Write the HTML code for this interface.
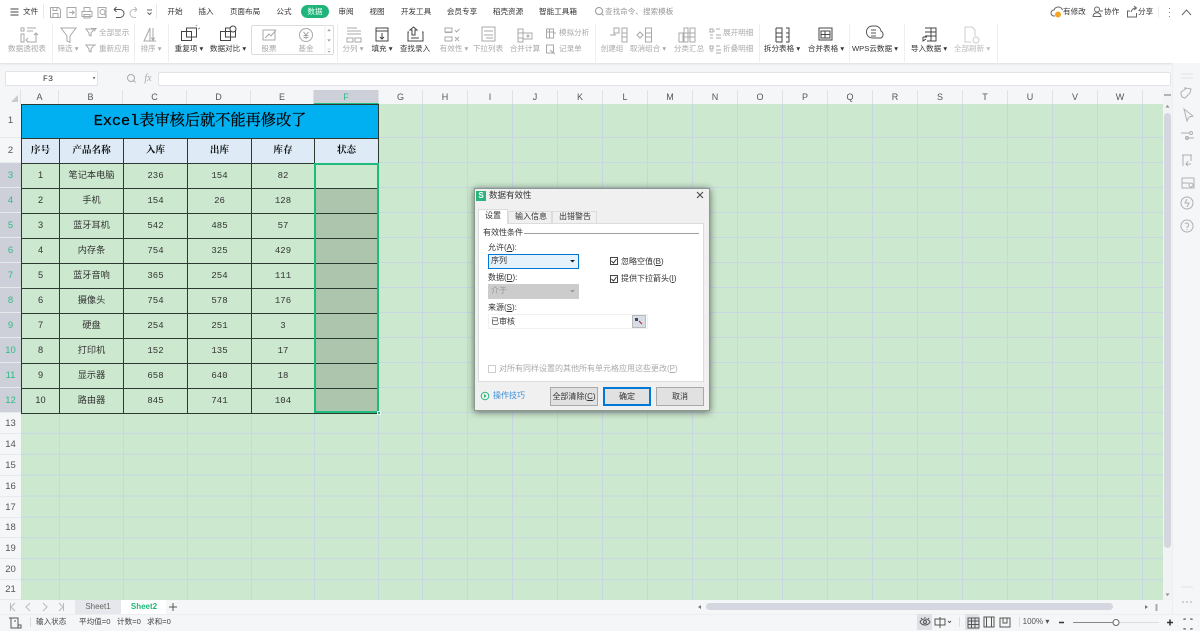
<!DOCTYPE html>
<html lang="zh"><head><meta charset="utf-8"><title>Excel</title>
<style>
html,body{margin:0;padding:0;width:1200px;height:631px;overflow:hidden;background:#f5f6f8}
body{position:relative;font-family:"Liberation Sans","Noto Sans CJK SC",sans-serif;font-size:7.6px;color:#444;filter:blur(.3px)}
.a{position:absolute}
.t{position:absolute;white-space:nowrap;transform:translate(-50%,-50%);line-height:1}
.l{position:absolute;white-space:nowrap;transform:translateY(-50%);line-height:1}
.g{color:#aaa}.d{color:#333}
.h{position:absolute;top:90px;height:14px;background:#f5f6f8;border-right:1px solid #dfe1e6;box-sizing:border-box;text-align:center;font-size:9px;line-height:14px;color:#555}
.r{position:absolute;left:0;width:21px;background:#f5f6f8;box-sizing:border-box;text-align:center;font-size:9.5px;color:#555;border-bottom:1px solid #e8e9ed}
.rs{background:#cdd0d8;color:#2dbb85}
table{position:absolute;left:21px;top:104px;width:357px;height:309px;border-collapse:collapse;table-layout:fixed;font-family:"Liberation Mono","Noto Serif CJK SC",serif;color:#333}
td{border:1px solid #2c3a30;text-align:center;padding:0;font-size:9px;height:24px;overflow:hidden;line-height:1}
tr.h1 td{height:33px;background:#00b0f0;font-size:15.2px;font-weight:normal;color:#000;-webkit-text-stroke:.25px #000}
tr.h2 td{background:#deebf7;font-weight:bold;font-size:9.6px;color:#111}
td.c{font-family:"Liberation Sans","Noto Sans CJK SC",sans-serif;font-size:9.2px;color:#333}
td.s{background:#adc4ad}
.btn{position:absolute;top:387px;width:48px;height:19px;box-sizing:border-box;border:1px solid #a9a9a9;background:#e1e1e1;text-align:center;line-height:17px;font-size:8px;color:#333}
svg{position:absolute;left:0;top:0;overflow:visible}
</style></head><body>

<!-- ribbon -->
<div class="a" style="left:0;top:0;width:1200px;height:63px;background:#fff;box-shadow:0 1px 2px #dcdde0"></div>

<div class="l d" style="left:23px;top:12px">文件</div>
<div class="t d" style="left:175px;top:12px">开始</div>
<div class="t d" style="left:206px;top:12px">插入</div>
<div class="t d" style="left:245px;top:12px">页面布局</div>
<div class="t d" style="left:284px;top:12px">公式</div>
<div class="a" style="left:301px;top:5px;width:28px;height:13px;border-radius:7px;background:#1fb57a"></div>
<div class="t" style="left:315px;top:12px;color:#e8fff5">数据</div>
<div class="t d" style="left:346px;top:12px">审阅</div>
<div class="t d" style="left:377px;top:12px">视图</div>
<div class="t d" style="left:416px;top:12px">开发工具</div>
<div class="t d" style="left:462px;top:12px">会员专享</div>
<div class="t d" style="left:508px;top:12px">稻壳资源</div>
<div class="t d" style="left:558px;top:12px">智能工具箱</div>
<div class="l" style="left:605px;top:12px;color:#999">查找命令、搜索模板</div>
<div class="l d" style="left:1063px;top:12px">有修改</div>
<div class="l d" style="left:1104px;top:12px">协作</div>
<div class="l d" style="left:1138px;top:12px">分享</div>

<div class="t g" style="left:27px;top:49px">数据透视表</div>
<div class="t g" style="left:68px;top:49px">筛选 ▾</div>
<div class="l g" style="left:99px;top:33px">全部显示</div>
<div class="l g" style="left:99px;top:49px">重新应用</div>
<div class="t g" style="left:151px;top:49px">排序 ▾</div>
<div class="t d" style="left:189px;top:49px">重复项 ▾</div>
<div class="t d" style="left:228px;top:49px">数据对比 ▾</div>
<div class="a" style="left:251px;top:25px;width:83px;height:30px;border:1px solid #dcdcdc;border-radius:2px;box-sizing:border-box"></div>
<div class="t g" style="left:269px;top:49px">股票</div>
<div class="t g" style="left:306px;top:49px">基金</div>
<div class="t g" style="left:353px;top:49px">分列 ▾</div>
<div class="t d" style="left:382px;top:49px">填充 ▾</div>
<div class="t d" style="left:415px;top:49px">查找录入</div>
<div class="t g" style="left:454px;top:49px">有效性 ▾</div>
<div class="t g" style="left:488px;top:49px">下拉列表</div>
<div class="t g" style="left:525px;top:49px">合并计算</div>
<div class="l g" style="left:559px;top:33px">模拟分析</div>
<div class="l g" style="left:559px;top:49px">记录单</div>
<div class="t g" style="left:612px;top:49px">创建组</div>
<div class="t g" style="left:648px;top:49px">取消组合 ▾</div>
<div class="t g" style="left:689px;top:49px">分类汇总</div>
<div class="l g" style="left:723px;top:33px">展开明细</div>
<div class="l g" style="left:723px;top:49px">折叠明细</div>
<div class="t d" style="left:782px;top:49px">拆分表格 ▾</div>
<div class="t d" style="left:826px;top:49px">合并表格 ▾</div>
<div class="t d" style="left:875px;top:49px">WPS云数据 ▾</div>
<div class="t d" style="left:929px;top:49px">导入数据 ▾</div>
<div class="t g" style="left:972px;top:49px;color:#bbb">全部刷新 ▾</div>

<!-- formula bar -->
<div class="a" style="left:5px;top:71px;width:93px;height:15px;background:#fff;border:1px solid #e2e3e6;box-sizing:border-box;border-radius:2px"></div>
<div class="t" style="left:48px;top:79px;font-family:'Liberation Mono',monospace;font-size:8.5px;color:#333">F3</div>
<div class="t" style="left:94px;top:79px;font-size:5px;color:#666">▾</div>
<div class="t" style="left:148px;top:79px;font-family:'Liberation Serif',serif;font-style:italic;font-size:10px;color:#aaa">fx</div>
<div class="a" style="left:158px;top:72px;width:1013px;height:14px;background:#fff;border:1px solid #e2e3e6;box-sizing:border-box;border-radius:2px"></div>

<!-- sheet area -->
<div class="a" id="sheet" style="left:21px;top:104px;width:1142px;height:496px;background:#cce8cf"></div>
<div class="a" style="left:378px;top:104px;width:785px;height:496px;background-image:linear-gradient(to right,transparent 44px,#c8d6e2 44px);background-size:45px 100%"></div>
<div class="a" style="left:378px;top:138px;width:785px;height:275px;background-image:linear-gradient(to bottom,transparent 24px,#c8d6e2 24px);background-size:100% 25px"></div>
<div class="a" style="left:378px;top:137px;width:785px;height:1px;background:#c8d6e2"></div>
<div class="a" style="left:21px;top:413px;width:1142px;height:187px;background-image:linear-gradient(to bottom,transparent 20px,#c8d6e2 20px);background-size:100% 20.9px"></div>
<div class="a" style="left:59px;top:413px;width:1px;height:187px;background:#c8d6e2"></div>
<div class="a" style="left:123px;top:413px;width:1px;height:187px;background:#c8d6e2"></div>
<div class="a" style="left:187px;top:413px;width:1px;height:187px;background:#c8d6e2"></div>
<div class="a" style="left:251px;top:413px;width:1px;height:187px;background:#c8d6e2"></div>
<div class="a" style="left:314px;top:413px;width:1px;height:187px;background:#c8d6e2"></div>
<div class="a" style="left:378px;top:413px;width:1px;height:187px;background:#c8d6e2"></div>

<table>
<colgroup><col style="width:38px"><col style="width:64px"><col style="width:64px"><col style="width:64px"><col style="width:63px"><col style="width:64px"></colgroup>
<tr class="h1"><td colspan="6">Excel表审核后就不能再修改了</td></tr>
<tr class="h2"><td>序号</td><td>产品名称</td><td>入库</td><td>出库</td><td>库存</td><td>状态</td></tr>
<tr><td class="c">1</td><td class="c">笔记本电脑</td><td>236</td><td>154</td><td>82</td><td></td></tr>
<tr><td class="c">2</td><td class="c">手机</td><td>154</td><td>26</td><td>128</td><td class="s"></td></tr>
<tr><td class="c">3</td><td class="c">蓝牙耳机</td><td>542</td><td>485</td><td>57</td><td class="s"></td></tr>
<tr><td class="c">4</td><td class="c">内存条</td><td>754</td><td>325</td><td>429</td><td class="s"></td></tr>
<tr><td class="c">5</td><td class="c">蓝牙音响</td><td>365</td><td>254</td><td>111</td><td class="s"></td></tr>
<tr><td class="c">6</td><td class="c">摄像头</td><td>754</td><td>578</td><td>176</td><td class="s"></td></tr>
<tr><td class="c">7</td><td class="c">硬盘</td><td>254</td><td>251</td><td>3</td><td class="s"></td></tr>
<tr><td class="c">8</td><td class="c">打印机</td><td>152</td><td>135</td><td>17</td><td class="s"></td></tr>
<tr><td class="c">9</td><td class="c">显示器</td><td>658</td><td>640</td><td>18</td><td class="s"></td></tr>
<tr><td class="c">10</td><td class="c">路由器</td><td>845</td><td>741</td><td>104</td><td class="s"></td></tr>
</table>
<div class="a" style="left:314px;top:163px;width:65px;height:250px;border:2px solid #1fba7e;box-sizing:border-box"></div>
<div class="a" style="left:377px;top:411px;width:4px;height:4px;background:#1fba7e;border:1px solid #e8fff2;box-sizing:border-box"></div>
<div class="a" style="left:20px;top:163px;width:1px;height:250px;background:#1fba7e"></div>

<!-- column headers -->
<div class="a" style="left:0;top:90px;width:1163px;height:14px;background:#f5f6f8"></div>
<div class="h" style="left:0;width:21px"></div>
<div class="h" style="left:21px;width:38px">A</div>
<div class="h" style="left:59px;width:64px">B</div>
<div class="h" style="left:123px;width:64px">C</div>
<div class="h" style="left:187px;width:64px">D</div>
<div class="h" style="left:251px;width:63px">E</div>
<div class="h" style="left:314px;width:65px;background:#cdd0d8;color:#2dbb85;border-bottom:1px solid #1fba7e">F</div>
<div class="h" style="left:379px;width:44px">G</div>
<div class="h" style="left:423px;width:45px">H</div>
<div class="h" style="left:468px;width:45px">I</div>
<div class="h" style="left:513px;width:45px">J</div>
<div class="h" style="left:558px;width:45px">K</div>
<div class="h" style="left:603px;width:45px">L</div>
<div class="h" style="left:648px;width:45px">M</div>
<div class="h" style="left:693px;width:45px">N</div>
<div class="h" style="left:738px;width:45px">O</div>
<div class="h" style="left:783px;width:45px">P</div>
<div class="h" style="left:828px;width:45px">Q</div>
<div class="h" style="left:873px;width:45px">R</div>
<div class="h" style="left:918px;width:45px">S</div>
<div class="h" style="left:963px;width:45px">T</div>
<div class="h" style="left:1008px;width:45px">U</div>
<div class="h" style="left:1053px;width:45px">V</div>
<div class="h" style="left:1098px;width:45px">W</div>
<div class="h" style="left:1143px;width:20px;border-right:0"></div>

<!-- row headers -->
<div class="r" style="top:104px;height:34px;line-height:34px">1</div>
<div class="r" style="top:138px;height:25px;line-height:25px">2</div>
<div class="r rs" style="top:163px;height:25px;line-height:25px">3</div>
<div class="r rs" style="top:188px;height:25px;line-height:25px">4</div>
<div class="r rs" style="top:213px;height:25px;line-height:25px">5</div>
<div class="r rs" style="top:238px;height:25px;line-height:25px">6</div>
<div class="r rs" style="top:263px;height:25px;line-height:25px">7</div>
<div class="r rs" style="top:288px;height:25px;line-height:25px">8</div>
<div class="r rs" style="top:313px;height:25px;line-height:25px">9</div>
<div class="r rs" style="top:338px;height:25px;line-height:25px">10</div>
<div class="r rs" style="top:363px;height:25px;line-height:25px">11</div>
<div class="r rs" style="top:388px;height:25px;line-height:25px">12</div>
<div class="r" style="top:413px;height:21px;line-height:21px">13</div>
<div class="r" style="top:434px;height:21px;line-height:21px">14</div>
<div class="r" style="top:455px;height:21px;line-height:21px">15</div>
<div class="r" style="top:476px;height:21px;line-height:21px">16</div>
<div class="r" style="top:497px;height:21px;line-height:21px">17</div>
<div class="r" style="top:518px;height:20px;line-height:20px">18</div>
<div class="r" style="top:538px;height:21px;line-height:21px">19</div>
<div class="r" style="top:559px;height:21px;line-height:21px">20</div>
<div class="r" style="top:580px;height:20px;line-height:20px">21</div>

<!-- vertical scrollbar + side -->
<div class="a" style="left:1163px;top:90px;width:9px;height:510px;background:#f2f3f5"></div>
<div class="a" style="left:1164px;top:113px;width:7px;height:435px;background:#d5d7e0;border-radius:4px"></div>
<div class="a" style="left:1172px;top:63px;width:28px;height:568px;background:#f5f6f8;border-left:1px solid #eceef0;box-sizing:border-box"></div>

<!-- bottom -->
<div class="a" style="left:0;top:600px;width:1172px;height:14px;background:#f5f6f8"></div>
<div class="a" style="left:0;top:614px;width:1200px;height:17px;background:#f5f6f8;border-top:1px solid #eceef0;box-sizing:border-box"></div>
<div class="a" style="left:75px;top:600px;width:46px;height:14px;background:#e6e7ec"></div>
<div class="a" style="left:121px;top:600px;width:45px;height:14px;background:#fff"></div>
<div class="t" style="left:98px;top:607px;font-size:8px;color:#666">Sheet1</div>
<div class="t" style="left:144px;top:607px;font-size:8px;font-weight:bold;color:#1fb57a">Sheet2</div>
<div class="a" style="left:706px;top:603px;width:407px;height:7px;background:#d5d7e0;border-radius:4px"></div>
<div class="l" style="left:36px;top:622px;color:#444">输入状态</div>
<div class="l" style="left:79px;top:622px;color:#444">平均值=0</div>
<div class="l" style="left:117px;top:622px;color:#444">计数=0</div>
<div class="l" style="left:147px;top:622px;color:#444">求和=0</div>
<div class="t" style="left:1036px;top:622px;font-size:8px;color:#555">100% ▾</div>
<div class="a" style="left:917px;top:614px;width:15px;height:16px;background:#dfe1e6"></div>
<div class="a" style="left:965px;top:614px;width:14px;height:16px;background:#dfe1e6"></div>

<!-- icons -->
<svg width="1200" height="631" fill="none" stroke="#a8a8a8" stroke-width="1">
<!-- top bar -->
<g stroke="#444"><path d="M10.500 9h8M10.500 12h8M10.500 15h8"/></g>
<path d="M43.500 4v14M156.500 4v14" stroke="#e8e8e8"/>
<path d="M50.500 7.500h8l2 2v8h-10zM53 17.500v-4h5v4M53 7.500v3h4v-3"/>
<path d="M67 7.500h9v10h-9zM69 12.500h5l-2-2M74 12.500l-2 2"/>
<path d="M82 11.500h10v5h-10zM84 11.500v-4h6v4M84 14.500h6v3.500h-6z"/>
<path d="M98 7.500h8v10h-8z"/><circle cx="102.500" cy="12" r="2.500"/><path d="M104.500 14l2 3"/>
<path d="M114 9.500h6a4 4 0 0 1 0 8h-4M114 9.500l2.500-2.500M114 9.500l2.500 2.500" stroke="#555"/>
<path d="M137 9.500h-3a4 4 0 0 0 0 8h2M137 9.500l-2.500-2.500M137 9.500l-2.500 2.500" stroke="#bbb"/>
<path d="M147 10h5M147.500 12.500l2 2 2-2" stroke="#666"/>
<!-- search -->
<circle cx="599" cy="11" r="3.500" stroke="#999"/><path d="M601.500 13.500l2 2" stroke="#999"/>
<!-- right top -->
<path d="M1055 16h-1a3 3 0 0 1 0-6 4.500 4.500 0 0 1 8.500 0" stroke="#666"/><circle cx="1058" cy="14.500" r="2.500" fill="#f5a623" stroke="#f5a623"/>
<circle cx="1097" cy="9.500" r="2.500" stroke="#666"/><path d="M1093 16.500c0-5 8-5 8 0zM1100 11h3" stroke="#666"/>
<path d="M1130 11h-2.500v6h9v-4M1131 12c1-3 3-4 5-4M1134 6l2.500 2-2.500 2" stroke="#666"/>
<path d="M1158.500 6v12" stroke="#eee"/>
<path d="M1169.500 8v1M1169.500 12v1M1169.500 16v1" stroke="#888"/>
<path d="M1182 15l4.500-5 4.500 5" stroke="#666"/>
<!-- ribbon separators -->
<path d="M52.500 24v38M134.500 24v38M168.500 24v38M337.500 24v38M595.500 24v38M759.500 24v38M849.500 24v38M904.500 24v38M997.500 24v38" stroke="#eeeeee"/>
<!-- pivot -->
<path d="M21 28h3v3h-3zM21 34h3v8h-3zM27 28h9M27 31h6M36 33v9h-9M28 38l-2 2 2 2M34 35l2-2 2 2"/>
<!-- filter -->
<path d="M61 28h15l-6 8v6.500l-3-1.500v-5z"/>
<path d="M86 29h8l-3 4v3l-2-1v-2zM91 28.500h5l-2 3"/>
<path d="M86 45h8l-3 4v3l-2-1v-2zM91 45h5"/>
<!-- sort -->
<path d="M144 41l6-13v13zM144 41h12M153 28v12M151.500 37.500l1.500 3 1.500-3"/>
<!-- dup -->
<g stroke="#444"><path d="M181.500 31.500h10v9h-10zM186.500 28h10v9h-10z"/><path d="M196 26l1-1M198 29l2-1" stroke="#999"/></g>
<g stroke="#444"><path d="M220.500 31.500h10v9h-10zM225.500 28h10v9h-10z"/><circle cx="233" cy="29" r="3" fill="#fff"/></g>
<!-- stock, fund -->
<path d="M263 30h12v10h-12zM265 38l4-4 2 2 5-6"/>
<circle cx="306" cy="35" r="6.500"/><path d="M303.500 32l2.500 3 2.500-3M303.500 35.500h5M303.500 37.500h5M306 35v4"/>
<path d="M325 25v30" stroke="#eee"/><path d="M329 29l-1.500 2h3zM327.500 39.500h3l-1.500 2zM327.500 49h3M327.500 51l1.500 1.500 1.500-1.500" fill="#aaa" stroke="#aaa" stroke-width=".5"/>
<!-- split col -->
<path d="M347 28h10M347 31h14M347 34h14M347 38h6v4h-6zM355 38h6v4h-6z"/>
<!-- fill -->
<path d="M376 28h12v13h-12zM376 31h12M382 33v6M380 37l2 2 2-2" stroke="#444"/>
<!-- lookup -->
<path d="M409 32h-1v9h15v-9h-1M411 38h8" stroke="#444"/><path d="M412 35v-5h-2l3.500-3 3.500 3h-2v5z" stroke="#444"/>
<!-- validity -->
<path d="M445 28h7v4h-7zM445 37h7v4h-7zM445 32.500h7M455 30l1.500 2 3-3M455 37l4 4M459 37l-4 4"/>
<path d="M482 27h13v14h-13zM484 31h9M484 35h9M486 38h7"/>
<path d="M518 29h5v13h-5zM523 33h9v6h-9zM518 33h5M518 38h5"/><circle cx="528" cy="36" r="1"/>
<path d="M546.500 29h7v9h-7zM546.500 32h7M549.500 29v9M554 33h2"/>
<path d="M546.500 45h7v8h-7zM550 50l5 4"/>
<!-- group -->
<path d="M614 28h5v5h-5zM622 28h5v14h-5zM622 33h5M622 37h5M610 35h4v-2M616 35l-2 0"/>
<path d="M645.500 28h6v14h-6zM645.500 33h6M645.500 37h6M637 35l3-3 3 3-3 3z"/>
<path d="M684 28h4v14h-4zM690 28h5v14h-5zM679 33h4v9h-4zM684 33h11M684 37h11"/>
<path d="M710 29h3v3h-3zM710 35h3M710 38h3M716 29h4M716 35h5M716 38h5M714 31h1"/>
<path d="M710 46h3v3h-3zM710 51h3M716 46h4M716 50h5M716 53h5"/>
<!-- split/merge -->
<g stroke="#444"><path d="M776 28h6v14h-6M776 28v14M776 33h6M776 37h6M786 28h3v14h-3M786 33h3M786 37h3"/></g>
<g stroke="#444"><path d="M819 28h13v12h-13zM821 31h9v7h-9zM821 34.500h9M825 31v7"/></g>
<path d="M872 26h4a6 6 0 0 1 5 5 4 4 0 0 1 0 7h-8a6 6 0 0 1-1-12zM871 30h5M871 33h5M871 36h5" stroke="#555"/>
<g stroke="#444"><path d="M925 28h11v13h-9M925 32h11M925 36h11M931 28v13M927 37l-4 0M923 37v4l3-2"/></g>
<path d="M965 27h7l3 3v6M965 27v15h6" stroke="#ccc"/><circle cx="976" cy="40" r="3" stroke="#ccc"/>
<!-- formula search -->
<circle cx="131" cy="78" r="3.500" stroke="#aaa"/><path d="M133.500 80.500l2 2" stroke="#aaa"/>
<!-- corner triangle -->
<path d="M11 102h7v-7z" fill="#c8cacf" stroke="none"/>
<!-- vertical scroll buttons -->
<path d="M1164 95h7" stroke="#888" stroke-width="1.200"/>
<path d="M1167.500 105l-2 2.500h4z" fill="#888" stroke="none"/>
<path d="M1165.500 593.500h4l-2 2.500z" fill="#888" stroke="none"/>
<!-- side icons -->
<g stroke="#b0b0b0">
<path d="M1181 92l6-4 4 1-1 4-5 5-3-1-1-3zM1184 88h3"/>
<path d="M1184 109l3 12 2-4 4-1z"/>
<path d="M1181 133h8M1186 138h8"/><circle cx="1191" cy="133" r="1.500"/><circle cx="1187" cy="138" r="1.500"/>
<path d="M1182 155h10M1183 155v11M1191 155v6M1186 164h5M1188 161l-2 3 2 2"/>
<path d="M1182 178h12v10h-12zM1182 183h7"/><circle cx="1191" cy="185" r="2"/>
<circle cx="1187" cy="203" r="6"/><path d="M1187 199l-2 4h4l-2 4"/>
<circle cx="1187" cy="226" r="6"/><path d="M1185 224a2 2 0 1 1 2 3v1M1187 229v1"/>
<path d="M1181 78h12M1181 74h12" stroke="#e2e2e2"/>
<path d="M1181 587h12" stroke="#e2e2e2"/>
<path d="M1182 602h2M1186 602h2M1190 602h2" stroke="#aaa"/>
</g>
<!-- sheet nav -->
<g stroke="#bbb"><path d="M10.500 603v8M15 603l-4 4 4 4M30 603l-4 4 4 4M43 603l4 4-4 4M59 603l4 4-4 4M63.500 603v8"/></g>
<path d="M173 603v8M169 607h8" stroke="#555"/>
<path d="M701 605l-3 2 3 2z" fill="#777" stroke="none"/>
<path d="M1145 605l3 2-3 2z" fill="#777" stroke="none"/>
<path d="M1156.500 604v7" stroke="#aaa" stroke-width="2"/>
<!-- status icons -->
<path d="M11 618h7v10h-7zM9 618h3M18 625h3v3h-9M14 621h2" stroke="#555"/>
<path d="M30.500 617v10" stroke="#ddd"/>
<g stroke="#555">
<path d="M920 622c2-4 8-4 10 0-2 4-8 4-10 0z"/><circle cx="925" cy="622" r="1.500"/><path d="M921 618l1 1M925 617v1M929 618l-1 1"/>
<path d="M935 619h10v6h-10zM940 617v11"/><path d="M948 621l1.500 1.500 1.500-1.500"/>
<path d="M968 618h11v10h-11zM968 621h11M968 624.500h11M971.500 618v10M975 618v10"/>
<path d="M984 617h10v10h-10zM986.500 617v10M991.500 617v10"/>
<path d="M1000 618h10v9h-10zM1003 618v5h4v-5"/>
<path d="M959.500 617v10M1019.500 617v10" stroke="#ddd"/>
<path d="M1059 622.500h5" stroke-width="1.500" stroke="#333"/>
<path d="M1073 622.500h40" stroke="#888"/><path d="M1119 622.500h40" stroke="#ddd"/>
<circle cx="1116" cy="622.500" r="3" fill="#fff" stroke="#666"/>
<path d="M1167 622.500h6M1170 619.500v6" stroke-width="1.500" stroke="#333"/>
<path d="M1184 620v-1h2M1190 619h2v1M1184 628v1h2M1192 628v1h-2" stroke="#555"/>
</g>
</svg>

<!-- dialog -->
<div class="a" style="left:474px;top:188px;width:236px;height:223px;background:#f0f0f0;border:1px solid #8a9a8c;box-sizing:border-box;box-shadow:0 1px 7px rgba(0,0,0,.55)"></div>
<div class="a" style="left:476px;top:191px;width:10px;height:10px;background:#2ab57d"></div>
<div class="t" style="left:481px;top:196px;color:#fff;font-size:8px;font-weight:bold">S</div>
<div class="l" style="left:489px;top:195px;font-size:8.5px;color:#333">数据有效性</div>
<svg width="1200" height="631" fill="none"><path d="M697 192l6 6M703 192l-6 6" stroke="#444"/></svg>
<div class="a" style="left:478px;top:223px;width:226px;height:159px;background:#fff;border:1px solid #dcdcdc;box-sizing:border-box"></div>
<div class="a" style="left:478px;top:209px;width:30px;height:15px;background:#fff;border:1px solid #dcdcdc;border-bottom:0;box-sizing:border-box"></div>
<div class="a" style="left:508px;top:211px;width:44px;height:12px;background:#f0f0f0;border:1px solid #dcdcdc;border-bottom:0;box-sizing:border-box"></div>
<div class="a" style="left:552px;top:211px;width:45px;height:12px;background:#f0f0f0;border:1px solid #dcdcdc;border-bottom:0;box-sizing:border-box"></div>
<div class="t" style="left:493px;top:216px;font-size:8px;color:#333">设置</div>
<div class="t" style="left:531px;top:217px;font-size:8px;color:#333">输入信息</div>
<div class="t" style="left:575px;top:217px;font-size:8px;color:#333">出错警告</div>
<div class="l" style="left:483px;top:233px;font-size:8px;color:#333">有效性条件</div>
<div class="a" style="left:524px;top:233px;width:175px;height:1px;background:#a0a0a0"></div>
<div class="l" style="left:488px;top:248px;font-size:8px;color:#333">允许(<u>A</u>):</div>
<div class="a" style="left:488px;top:254px;width:91px;height:15px;background:#e5f1fb;border:1px solid #0078d7;box-sizing:border-box"></div>
<div class="l" style="left:491px;top:261px;font-size:8px;color:#333">序列</div>
<div class="l" style="left:488px;top:278px;font-size:8px;color:#333">数据(<u>D</u>):</div>
<div class="a" style="left:488px;top:284px;width:91px;height:15px;background:#cccccc"></div>
<div class="l" style="left:491px;top:291px;font-size:8px;color:#999">介于</div>
<svg width="1200" height="631" fill="none"><path d="M570 260h5l-2.500 2.500z" fill="#222"/><path d="M570 290h5l-2.500 2.500z" fill="#999"/></svg>
<div class="l" style="left:488px;top:308px;font-size:8px;color:#333">来源(<u>S</u>):</div>
<div class="a" style="left:488px;top:314px;width:160px;height:15px;background:#fff;border:1px solid #f0f0f0;box-sizing:border-box"></div>
<div class="l" style="left:491px;top:322px;font-size:8px;color:#333">已审核</div>
<div class="a" style="left:632px;top:315px;width:14px;height:13px;background:#d8dde8;border:1px solid #bbb;box-sizing:border-box"></div>
<svg width="1200" height="631" fill="none">
<path d="M635 318h3v3h-3z" fill="#446"/><path d="M639 321l3 3" stroke="#a33" stroke-width="1.200"/>
<rect x="610.500" y="257.500" width="7" height="7" fill="#fff" stroke="#444"/><path d="M611.500 261l2 2 3-4" stroke="#333"/>
<rect x="610.500" y="275.500" width="7" height="7" fill="#fff" stroke="#444"/><path d="M611.500 279l2 2 3-4" stroke="#333"/>
<rect x="488.500" y="365.500" width="7" height="7" fill="#fff" stroke="#ccc"/>
<circle cx="485" cy="396" r="3.800" stroke="#2ab57d"/><path d="M484 394l2.500 2-2.500 2z" fill="#2ab57d"/>
</svg>
<div class="l" style="left:621px;top:262px;font-size:8px;color:#333">忽略空值(<u>B</u>)</div>
<div class="l" style="left:621px;top:279px;font-size:8px;color:#333">提供下拉箭头(<u>I</u>)</div>
<div class="l" style="left:499px;top:369px;font-size:8px;color:#aaa">对所有同样设置的其他所有单元格应用这些更改(<u>P</u>)</div>
<div class="l" style="left:493px;top:396px;font-size:8px;color:#3b8ed8">操作技巧</div>
<div class="btn" style="left:550px">全部清除(<u>C</u>)</div>
<div class="btn" style="left:603px;border:2px solid #0078d7;line-height:15px">确定</div>
<div class="btn" style="left:656px">取消</div>
</body></html>
